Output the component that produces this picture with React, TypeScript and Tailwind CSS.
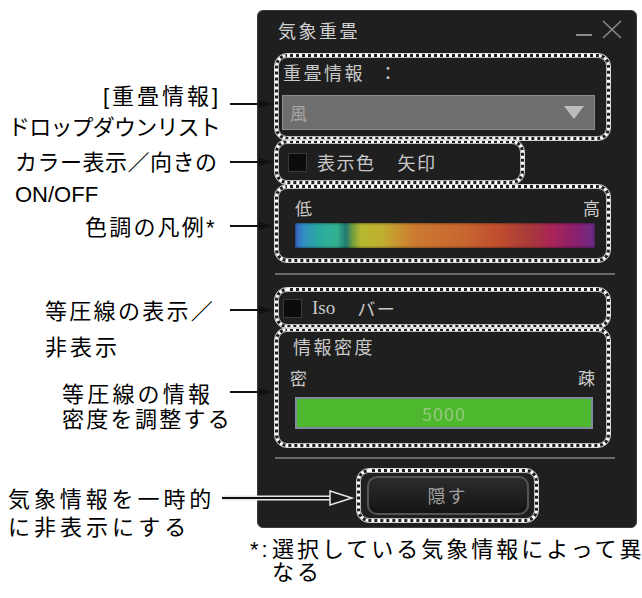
const BOX =
  'rounded-[12px] border-[3px] border-dotted border-white outline outline-[#d6d6d6] shadow-[inset_0_0_0_1px_#b8b8b8]'

function Checkbox() {
  return <div className="h-[19px] w-[19px] shrink-0 border border-[#3a3a3a] bg-[#0c0c0c]" />
}

function Panel() {
  return (
    <div className="mt-[10px] h-[518px] w-[380px] shrink-0 rounded-[6px] border border-[#3c3c3c] bg-[#1f1f1f] px-[17px] font-['Noto_Sans_CJK_JP',sans-serif] text-[18px] text-[#c9c9c9]">
      {/* title bar */}
      <div className="-mr-[3px] flex h-[43px] items-start justify-between">
        <div className="pl-[3px] pt-[7px] leading-[24px] tracking-[2.5px] text-[#d0d0d0]">気象重畳</div>
        <svg width="46" height="20" viewBox="0 0 46 20" className="mt-[9px]">
          <line x1="0" y1="15" x2="16" y2="15" stroke="#8a8a8a" strokeWidth="2" />
          <line x1="27" y1="1" x2="45" y2="18" stroke="#8a8a8a" strokeWidth="1.6" />
          <line x1="45" y1="1" x2="27" y2="18" stroke="#8a8a8a" strokeWidth="1.6" />
        </svg>
      </div>

      {/* 重畳情報 */}
      <div className={`${BOX} h-[86px] w-[335px] px-[4px] pt-[4px]`}>
        <div className="h-[22px] pl-[1px] leading-[22px] tracking-[2.5px] whitespace-nowrap">
          重畳情報<span className="ml-[14px]">：</span>
        </div>
        <div className="mt-[12px] flex h-[35px] w-[313px] items-center justify-between border border-[#8c8c8c] bg-[#6e6e6e] pl-[7px] pr-[10px]">
          <span className="text-[17px] text-[#a6a6a6]">風</span>
          <svg width="20" height="13" viewBox="0 0 20 13">
            <polygon points="0,0 20,0 10,13" fill="#bdbdbd" />
          </svg>
        </div>
      </div>

      {/* 表示色 / 矢印 */}
      <div className={`${BOX} flex h-[44px] w-[249px] items-center pl-[10px]`}>
        <Checkbox />
        <span className="ml-[10px] tracking-[1.5px]">表示色</span>
        <span className="ml-[22px] tracking-[1.5px]">矢印</span>
      </div>

      {/* 凡例 */}
      <div className={`${BOX} mt-[1px] h-[77px] w-[335px] pl-[17px] pr-[7px] pt-[10px]`}>
        <div className="flex h-[20px] justify-between text-[17px] leading-[20px]">
          <span>低</span>
          <span>高</span>
        </div>
        <div className="mt-[5px] h-[25px] w-[300px] bg-[linear-gradient(90deg,#3a64c8_0%,#2f8fc0_3%,#2aaa9e_8%,#33b090_14%,#1f7a70_17%,#6a9a40_19%,#b8b830_22%,#c0b030_29%,#c89a30_33%,#cc7a30_40%,#c86830_55%,#c04e2e_68%,#a83a3a_78%,#a82458_86%,#8a2070_94%,#6a2c88_100%)] shadow-[inset_0_0_3px_rgba(0,0,0,0.7)]" />
      </div>

      <div className="mt-[11px] h-[2px] w-[340px] bg-[#6b6b6b]" />

      {/* Iso バー */}
      <div className={`${BOX} mt-[13px] flex h-[40px] w-[335px] items-center pl-[5px]`}>
        <Checkbox />
        <span className="ml-[10px] font-['Liberation_Serif',serif] text-[19px]">Iso</span>
        <span className="ml-[22px] tracking-[1.5px]">バー</span>
      </div>

      {/* 情報密度 */}
      <div className={`${BOX} h-[119px] w-[335px] px-[12px] pt-[4px]`}>
        <div className="ml-[3px] h-[22px] leading-[22px] tracking-[2.5px]">情報密度</div>
        <div className="mt-[10px] flex h-[22px] justify-between text-[17px] leading-[22px]">
          <span>密</span>
          <span>疎</span>
        </div>
        <div className="ml-[5px] mt-[8px] flex h-[32px] w-[298px] items-center justify-center border-2 border-[#7e8c9c] bg-[#4db82d]">
          <span className="text-[18px] tracking-[1px] text-[#93c97c] blur-[0.5px]">5000</span>
        </div>
      </div>

      <div className="mt-[10px] h-[2px] w-[340px] bg-[#6b6b6b]" />

      {/* 隠す */}
      <div className={`${BOX} ml-[82px] mt-[10px] flex h-[53px] w-[181px] items-center justify-center`}>
        <div className="flex h-[39px] w-[162px] items-center justify-center rounded-[10px] border-2 border-[#555] bg-[linear-gradient(180deg,#2c2c2c,#141414)]">
          <span className="tracking-[2px] text-[#a0a0a0]">隠す</span>
        </div>
      </div>
    </div>
  )
}

function Arrows() {
  const ys = [104, 162, 226, 310, 392]
  return (
    <svg className="pointer-events-none absolute left-0 top-0" width="642" height="598" viewBox="0 0 642 598">
      {ys.map(y => (
        <g key={y}>
          <line x1="230" y1={y} x2="262" y2={y} stroke="#111" strokeWidth="2" />
          <polygon points={`259,${y - 4} 274,${y} 259,${y + 4}`} fill="#111" />
        </g>
      ))}
      {/* hollow arrow into the 隠す button */}
      <line x1="222" y1="498" x2="332" y2="498" stroke="#e8e8e8" strokeWidth="5" />
      <line x1="222" y1="498" x2="334" y2="498" stroke="#111" strokeWidth="2" />
      <polygon points="330,491 352,498 330,505" fill="#1a1a1a" stroke="#e8e8e8" strokeWidth="1.5" />
    </svg>
  )
}

export default function App() {
  return (
    <div className="relative h-[598px] w-[642px] overflow-hidden bg-white font-['Liberation_Sans','Noto_Sans_CJK_JP',sans-serif]">
      <div className="flex h-[538px]">
        <div className="w-[257px] shrink-0 whitespace-nowrap pt-[83px] text-[22px] leading-[28px] text-black">
          <div className="h-[28px] pl-[103px] tracking-[3px]">[重畳情報]</div>
          <div className="mt-[3px] h-[28px] pl-[8px] tracking-[-0.8px]">ドロップダウンリスト</div>
          <div className="mt-[7px] h-[28px] pl-[15px] tracking-[0.5px]">カラー表示／向きの</div>
          <div className="mt-[4px] h-[28px] pl-[15px]">ON/OFF</div>
          <div className="mt-[5px] h-[28px] pl-[85px] tracking-[2.2px]">色調の凡例*</div>
          <div className="mt-[56px] h-[28px] pl-[45px] tracking-[2.3px]">等圧線の表示／</div>
          <div className="mt-[8px] h-[28px] pl-[45px] tracking-[3px]">非表示</div>
          <div className="mt-[19px] h-[28px] pl-[62px] tracking-[3.2px]">等圧線の情報</div>
          <div className="-mt-[3px] h-[28px] pl-[62px] tracking-[2.3px]">密度を調整する</div>
          <div className="mt-[52px] h-[28px] pl-[8px] tracking-[3.9px]">気象情報を一時的</div>
          <div className="h-[28px] pl-[8px] tracking-[4px]">に非表示にする</div>
        </div>
        <Panel />
      </div>

      <div className="flex whitespace-nowrap pl-[250px] text-[22px] leading-[23px] text-black">
        <span className="w-[22px] shrink-0 tracking-[3px]">*:</span>
        <div className="tracking-[3px]">
          <div>選択している気象情報によって異</div>
          <div>なる</div>
        </div>
      </div>

      <Arrows />
    </div>
  )
}
